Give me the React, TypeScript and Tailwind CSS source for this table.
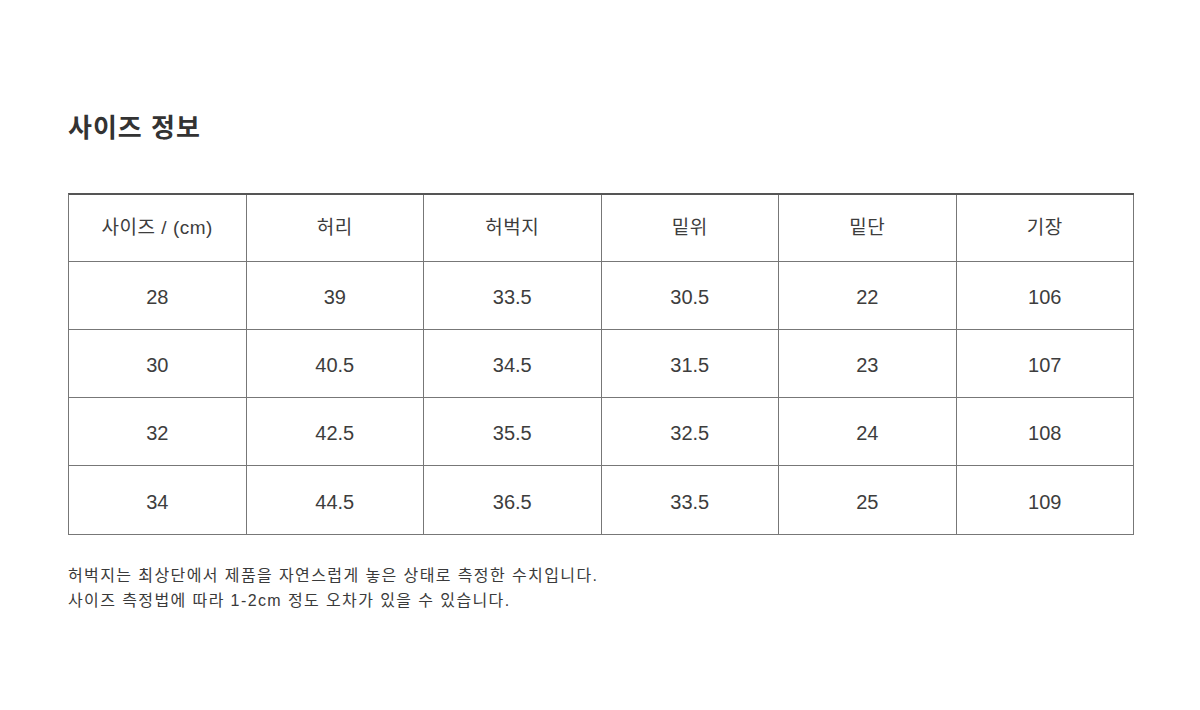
import React from "react";

const headers = ["사이즈 / (cm)", "허리", "허벅지", "밑위", "밑단", "기장"];
const rows = [
  ["28", "39", "33.5", "30.5", "22", "106"],
  ["30", "40.5", "34.5", "31.5", "23", "107"],
  ["32", "42.5", "35.5", "32.5", "24", "108"],
  ["34", "44.5", "36.5", "33.5", "25", "109"],
];

export default function App() {
  return (
    <div
      className="w-[1200px] h-[710px] bg-white text-[#3d3d3d] pl-[68px] pt-[110px]"
      style={{ fontFamily: '"Liberation Sans", "Noto Sans CJK KR", sans-serif' }}
    >
      <h1 className="text-[26px] leading-[36px] font-bold text-[#333] tracking-[1px]">사이즈 정보</h1>
      <div className="mt-[47px] w-[1066px] border-t-2 border-t-[#555] border-l border-b border-[#777]">
        <div className="grid grid-cols-6">
          {headers.map((h, i) => (
            <div
              key={i}
              className="h-[67px] flex items-center justify-center border-r border-b border-[#777] text-[19px] tracking-[0.5px]"
            >
              {h}
            </div>
          ))}
          {rows.map((r, ri) =>
            r.map((c, ci) => (
              <div
                key={`${ri}-${ci}`}
                className={`h-[68px] flex items-center justify-center border-r border-[#777] text-[20px] pt-[3px] ${
                  ri < rows.length - 1 ? "border-b" : ""
                }`}
              >
                {c}
              </div>
            ))
          )}
        </div>
      </div>
      <div className="mt-[28px] text-[16px] leading-[25px] tracking-[1.4px] text-[#3a3a3a]">
        <p>허벅지는 최상단에서 제품을 자연스럽게 놓은 상태로 측정한 수치입니다.</p>
        <p>사이즈 측정법에 따라 1-2cm 정도 오차가 있을 수 있습니다.</p>
      </div>
    </div>
  );
}
